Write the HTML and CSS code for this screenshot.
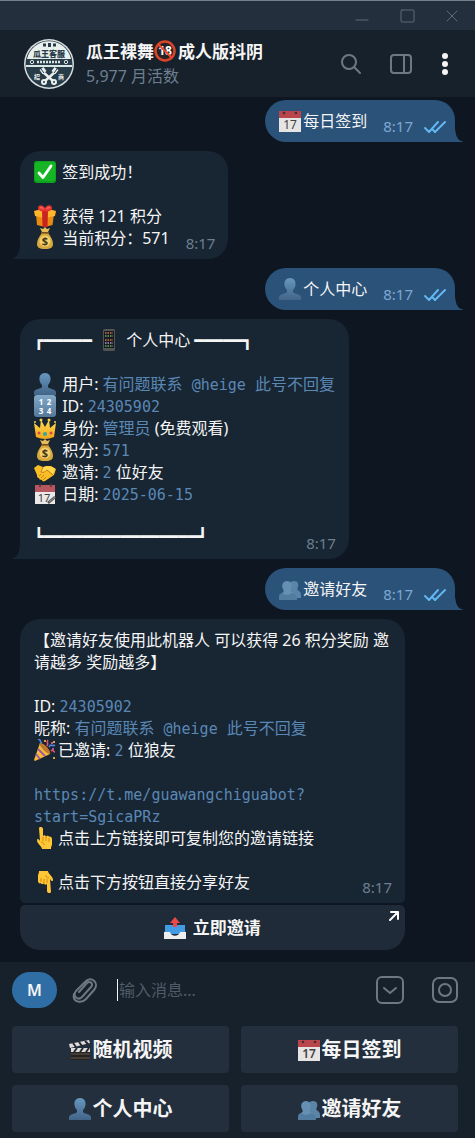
FILE: index.html
```html
<!DOCTYPE html>
<html lang="zh-CN">
<head>
  <meta charset="UTF-8">
  <meta name="viewport" content="width=device-width, initial-scale=1">
  <title>瓜王裸舞🔞成人版抖阴</title>
  <link rel="stylesheet" href="styles.css">
</head>
<body>
  <svg class="sprite" aria-hidden="true">
    <defs>
      <linearGradient id="blue" x1="0" y1="0" x2="0" y2="1"><stop offset="0" stop-color="#6797c0"/><stop offset="1" stop-color="#426487"/></linearGradient>
      <linearGradient id="gold" x1="0" y1="0" x2="0" y2="1"><stop offset="0" stop-color="#ffdc4f"/><stop offset="1" stop-color="#f1a51c"/></linearGradient>
      <linearGradient id="pad" x1="0" y1="0" x2="0" y2="1"><stop offset="0" stop-color="#83a9c9"/><stop offset="1" stop-color="#557899"/></linearGradient>
    </defs>
    <symbol id="check" viewBox="0 0 22 22">
      <rect width="22" height="22" rx="3" fill="#0ba51c"/><rect x="1" y="1" width="20" height="19" rx="3" fill="#17b526"/>
      <path fill="none" stroke="#fff" stroke-width="2.8" stroke-linecap="round" stroke-linejoin="round" d="M5 12l4 4.500L17 5"/>
    </symbol>
    <symbol id="gift" viewBox="0 0 22 22">
      <path fill="#e98b13" d="M2 9h18l-1.500 11L11 22l-8-2z"/>
      <path fill="#ffb52c" d="M0 6l11-3 11 3-1 5-10 2L1 11z"/>
      <path fill="#c9231f" d="M8 5h6l-.5 17h-5z"/><path fill="#e8352f" d="M11 6C8 7 4 6 4 3s4-4 7 0c3-4 7-3 7 0s-4 4-7 3z"/>
      <path fill="#ff766b" d="M6 3c0-2 3-1 4 1zM16 3c0-2-3-1-4 1z"/>
    </symbol>
    <symbol id="phone" viewBox="0 0 22 22">
      <rect x="5" y="0" width="12" height="22" rx="1.500" fill="#525653"/><rect x="6" y="2" width="10" height="17" fill="#161b20"/>
      <path stroke="#d4744e" stroke-width="1.500" stroke-dasharray="1.500 1" d="M7 4h8M7 11h8"/>
      <path stroke="#75a962" stroke-width="1.500" stroke-dasharray="1.500 1" d="M7 7h8M7 17h8"/>
      <path stroke="#b09bc3" stroke-width="1.500" stroke-dasharray="1.500 1" d="M7 14h8"/>
    </symbol>
    <symbol id="person" viewBox="0 0 22 22">
      <path fill="url(#blue)" d="M11 0c4 0 6 3 5.500 7-.3 2.500-1.500 4-2.500 5v2c1 2 7 1.500 8 5v3H0v-3c1-3.500 7-3 8-5v-2C7 11 5.800 9.500 5.500 7 5 3 7 0 11 0z"/>
    </symbol>
    <symbol id="people" viewBox="0 0 22 22">
      <path fill="#5a84a8" d="M15 3c4 0 5 3 4 6-1 2-1 3 1 4 2 1 2 3 2 7H8V9c2-1 2-6 7-6z"/>
      <path fill="#6590b3" d="M8 3c4 0 6 4 4 8-1 2 0 3 2 4 3 1 4 3 4 7H0c0-4 0-6 3-7 2-1 2-2 1-4-2-4 0-8 4-8z"/>
      <path fill="#426b90" d="M0 22c0-4 0-6 3-7 4 3 7 2 10 0 4 1 5 3 5 7z" opacity=".55"/>
    </symbol>
    <symbol id="crown" viewBox="0 0 22 22">
      <path fill="url(#gold)" d="M0 6l6 5 1-8 4 7 4-7 1 8 6-5-2 14q-9 4-18 0z"/>
      <g fill="#f7d34c"><circle cx="1" cy="5" r="1"/><circle cx="7" cy="3" r="1.500"/><circle cx="15" cy="3" r="1.500"/><circle cx="21" cy="5" r="1"/></g>
      <circle cx="11" cy="17" r="2" fill="#2fa8a0"/><circle cx="5" cy="16" r="1.500" fill="#d94747"/><circle cx="17" cy="16" r="1.500" fill="#d94747"/>
    </symbol>
    <symbol id="handshake" viewBox="0 0 22 22">
      <path fill="#f9bd25" d="M0 7l4-3 5 2 3-1 5 0 5 3-2 6-9 6c-2 1-3 0-3-1-2 0-3-1-3-2-2 0-2-2-2-3z"/>
      <path fill="#ffd84d" d="M8 7l5-2 5 1 3 2-2 5-5-4-4 2c-3 0-3-2-2-4z"/>
      <path fill="none" stroke="#bd791b" stroke-width=".9" d="M9 6l-2 5c2 1 4 0 6-2l6 5M5 15l2-2M7 17l3-3M9 19l3-3"/>
    </symbol>
    <symbol id="party" viewBox="0 0 22 22">
      <path fill="#f6bd35" d="M6 4c4 2 8 6 10 11L1 22l-1-1z"/>
      <path fill="#bd7830" d="M6 4c-2 2 6 11 10 11 2-2-6-12-10-11z"/>
      <path stroke="#a05aa5" stroke-width="2" d="M4 10l7 7M2 15l4 5"/>
      <path fill="none" stroke="#557fdb" stroke-width="1.700" d="M4 0c4 1 1 3 4 4M15 8c2-4 3 0 6-2"/>
      <path fill="none" stroke="#e95569" stroke-width="1.600" d="M13 7c2-3-1-4 1-6M17 12c2-2 2 1 4 1"/>
      <path fill="#d8a646" d="M10 1h2v2h-2zM19 2h2v2h-2zM19 18h2v2h-2z"/><path fill="#c1519a" d="M17 3h2v2h-2zM18 9h2v2h-2z"/>
    </symbol>
    <symbol id="point" viewBox="0 0 22 22">
      <path fill="#ffc635" d="M5 1c1-2 4-1 4 1v7c1-1 3-1 3 1 1-2 3-1 3 0 1-1 3 0 3 2v5c0 2-1 2-1 5H8c0-3-5-5-5-9 0-2 2-1 3 1z"/>
      <path fill="none" stroke="#d18915" d="M9 10v4M12 10v4M15 11v4M7 15c2 0 3 1 3 3"/>
    </symbol>
    <symbol id="outbox" viewBox="0 0 22 22">
      <path fill="#1d65ad" d="M3 8h16l3 8H0z"/><path fill="#439be4" d="M1 8h20v9H1z"/>
      <path fill="#eee" d="M0 15h6c1 5 9 5 10 0h6v7H0z"/>
      <path fill="#ec4849" d="M11 0l5 6h-3v4H9V6H6z"/>
    </symbol>
    <symbol id="clapper" viewBox="0 0 22 22">
      <path fill="#242322" d="M2 9h19v12H2z"/><path stroke="#51473f" stroke-width="1.500" d="M2 15h19M2 19h19"/>
      <path fill="#ddd" d="M2 9h19v4H2zM0 5l20-4 1 3L1 9z"/>
      <path stroke="#272727" stroke-width="2" d="M5 13l3-4M11 13l3-4M17 13l3-4M4 4l3 4M10 3l3 4M16 2l3 3"/>
    </symbol>
    <symbol id="ticks" viewBox="0 0 24 14">
      <path fill="none" stroke="#61b6f2" stroke-width="2" stroke-linecap="round" stroke-linejoin="round" d="M2 8l4 4 9-10M12 12l10-10"/>
      <path fill="none" stroke="#61b6f2" stroke-width="2" stroke-linecap="round" d="M9 9l3 3"/>
    </symbol>
  </svg>

  <div class="titlebar">
    <button aria-label="最小化"><svg width="16" height="16" viewBox="0 0 16 16"><path d="M2 12h12"/></svg></button>
    <button aria-label="最大化"><svg width="16" height="16" viewBox="0 0 16 16"><rect x="2" y="2" width="13" height="12" rx="1"/></svg></button>
    <button aria-label="关闭"><svg width="16" height="16" viewBox="0 0 16 16"><path d="M3 3l10 10M13 3L3 13"/></svg></button>
  </div>

  <header class="header">
    <svg class="avatar" viewBox="0 0 50 50" role="img" aria-label="瓜王客服">
      <circle cx="25" cy="25" r="25" fill="#d7dedd"/>
      <circle cx="25" cy="25" r="23.500" fill="#283b49"/>
      <path fill="#e9efed" d="M3 20a22.500 22.500 0 0 1 44 0z"/>
      <path fill="#283b49" d="M19 4.500h3v3h-3zM24 4h3v4h-3zM29 4.500h3v3h-3z"/>
      <text x="25" y="18" font-size="8" font-weight="900" text-anchor="middle" fill="#283b49">瓜王客服</text>
      <path fill="#dbe5e4" d="M2 26h46v2H2z"/>
      <circle cx="8" cy="23" r="1.700" fill="none" stroke="#dbe5e4"/><circle cx="42" cy="23" r="1.700" fill="none" stroke="#dbe5e4"/>
      <path stroke="#dbe5e4" stroke-width="2.500" stroke-dasharray="2 1" d="M13 23h24"/>
      <g stroke="#e9efed" stroke-width="2.500"><path d="M19 33l10 9M31 33l-10 9"/></g>
      <g stroke="#e9efed" stroke-width="5"><path d="M17 33l4-3M33 33l-4-3"/></g>
      <path stroke="#283b49" stroke-width="1" d="M17 30l3 4M33 30l-3 4"/>
      <circle cx="20" cy="43" r="2" fill="#283b49" stroke="#e9efed" stroke-width="2"/><circle cx="30" cy="43" r="2" fill="#283b49" stroke="#e9efed" stroke-width="2"/>
      <g fill="#e9efed" font-size="6" font-weight="bold" text-anchor="middle"><text x="13" y="40">招</text><text x="37" y="40">商</text></g>
    </svg>
    <div class="peer">
      <h1>瓜王裸舞<svg class="emoji" viewBox="0 0 22 22" role="img" aria-label="🔞">
        <circle cx="11" cy="11" r="9.500" fill="#272325" stroke="#d9452c" stroke-width="2.500"/>
        <text x="11" y="15" font-size="12" font-weight="bold" text-anchor="middle" fill="#fff">18</text>
        <path stroke="#ee4930" stroke-width="2" d="M4 4l14 14"/>
      </svg>成人版抖阴</h1>
      <p>5,977 月活数</p>
    </div>
    <nav class="actions">
      <button aria-label="搜索"><svg width="24" height="24" viewBox="0 0 24 24"><circle cx="10" cy="10" r="7"/><path d="M15 15l6 6"/></svg></button>
      <button aria-label="侧边栏"><svg width="24" height="24" viewBox="0 0 24 24"><rect x="2" y="3" width="20" height="18" rx="3"/><path d="M15 3v18"/></svg></button>
      <button class="dots" aria-label="更多"><svg width="8" height="24" viewBox="0 0 8 24"><circle cx="4" cy="4" r="3"/><circle cx="4" cy="12" r="3"/><circle cx="4" cy="20" r="3"/></svg></button>
    </nav>
  </header>

  <main class="chat">
    <div class="bubble out">
      <div class="last">
        <span><svg class="emoji" viewBox="0 0 22 22">
          <path fill="#e7e5e3" d="M0 5h22v17H0z"/>
          <path fill="#b9464c" d="M0 1h22v7H0z"/>
          <circle cx="5" cy="3" r="1.300" fill="#4d2a30"/><circle cx="17" cy="3" r="1.300" fill="#4d2a30"/>
          <text x="11" y="19" font-size="12" text-anchor="middle" fill="#414141">17</text>
        </svg>每日签到</span>
        <time>8:17</time><svg class="ticks"><use href="#ticks"/></svg>
      </div>
    </div>

    <div class="bubble in tail">
      <p><svg class="emoji"><use href="#check"/></svg> 签到成功！</p>
      <br>
      <p><svg class="emoji"><use href="#gift"/></svg> 获得 121 积分</p>
      <div class="last">
        <span><svg class="emoji" viewBox="0 0 22 22">
          <path fill="#d9a83d" d="M8 6h6c3 4 5 7 5 11 0 3-2 5-8 5s-8-2-8-5c0-4 2-7 5-11z"/>
          <path fill="#e6bd59" d="M8 5L6 1l3 1 2-2 2 2 3-1-2 4z"/><path stroke="#8f5e1b" stroke-width="1.500" d="M7 6h8"/>
          <circle cx="11" cy="14" r="5.500" fill="#f2d06d"/>
          <text x="11" y="18" font-size="11" font-weight="bold" text-anchor="middle" fill="#4b3717">$</text>
        </svg> 当前积分：571</span>
        <time>8:17</time>
      </div>
    </div>

    <div class="bubble out">
      <div class="last"><span><svg class="emoji"><use href="#person"/></svg>个人中心</span><time>8:17</time><svg class="ticks"><use href="#ticks"/></svg></div>
    </div>

    <div class="bubble in tail">
      <p><span class="frame">┏━━━━━</span> <svg class="emoji phone"><use href="#phone"/></svg> 个人中心 <span class="frame">━━━━━┓</span></p>
      <br>
      <p><svg class="emoji"><use href="#person"/></svg> 用户: <span class="value">有问题联系<code> @heige </code>此号不回复</span></p>
      <p><svg class="emoji" viewBox="0 0 22 22">
        <rect width="22" height="22" rx="3" fill="url(#pad)"/>
        <g fill="#fff" font-size="8" font-weight="bold" text-anchor="middle"><text x="7" y="10">1</text><text x="15" y="10">2</text><text x="7" y="19">3</text><text x="15" y="19">4</text></g>
      </svg> ID: <code>24305902</code></p>
      <p><svg class="emoji"><use href="#crown"/></svg> 身份: <span class="value">管理员</span> (免费观看)</p>
      <p><svg class="emoji" viewBox="0 0 22 22">
        <path fill="#d9a83d" d="M8 6h6c3 4 5 7 5 11 0 3-2 5-8 5s-8-2-8-5c0-4 2-7 5-11z"/>
        <path fill="#e6bd59" d="M8 5L6 1l3 1 2-2 2 2 3-1-2 4z"/><path stroke="#8f5e1b" stroke-width="1.500" d="M7 6h8"/>
        <circle cx="11" cy="14" r="5.500" fill="#f2d06d"/>
        <text x="11" y="18" font-size="11" font-weight="bold" text-anchor="middle" fill="#4b3717">$</text>
      </svg> 积分: <code>571</code></p>
      <p><svg class="emoji"><use href="#handshake"/></svg> 邀请: <code>2</code> 位好友</p>
      <p><svg class="emoji" viewBox="0 0 22 22">
        <path fill="#ebe9e8" d="M1 5h20v16H1z"/>
        <path fill="#b6575f" d="M1 2h20v7H1z"/>
        <path stroke="#45343a" stroke-width="1.400" d="M6 0v4M17 0v4"/>
        <text x="10" y="19" font-size="11" text-anchor="middle" fill="#414141">17</text>
        <path stroke="#555" stroke-width="2.600" d="M14 20l7-6"/><path stroke="#999" d="M15 19l6-5"/>
      </svg> 日期: <code>2025-06-15</code></p>
      <br>
      <div class="last"><span class="frame">┗━━━━━━━━━━━━━━━━┛</span><time>8:17</time></div>
    </div>

    <div class="bubble out">
      <div class="last"><span><svg class="emoji"><use href="#people"/></svg>邀请好友</span><time>8:17</time><svg class="ticks"><use href="#ticks"/></svg></div>
    </div>

    <div class="invite">
      <div class="bubble in">
        <p>【邀请好友使用此机器人 可以获得 26 积分奖励 邀请越多 奖励越多】</p>
        <br>
        <p>ID: <code>24305902</code></p>
        <p>昵称: <span class="value">有问题联系<code> @heige </code>此号不回复</span></p>
        <p><svg class="emoji"><use href="#party"/></svg>已邀请: <code>2</code> 位狼友</p>
        <br>
        <p><code>https://t.me/guawangchiguabot?<br>start=SgicaPRz</code></p>
        <p><svg class="emoji"><use href="#point"/></svg>点击上方链接即可复制您的邀请链接</p>
        <br>
        <div class="last"><span><svg class="emoji flip"><use href="#point"/></svg>点击下方按钮直接分享好友</span><time>8:17</time></div>
      </div>
      <button class="share">
        <svg class="emoji"><use href="#outbox"/></svg> 立即邀请
        <svg class="arrow" width="10" height="10" viewBox="0 0 10 10"><path d="M2 1h7v7M9 1L1 9"/></svg>
      </button>
    </div>
  </main>

  <footer class="composer">
    <form class="entry">
      <button type="button" class="menu">M</button>
      <button type="button" aria-label="附件"><svg width="26" height="28" viewBox="0 0 26 28"><path d="M7 16l8-9c3-3 7 1 4 4l-9 10c-4 4-10-1-6-6l9-9c6-7 15 1 9 8l-8 9c-5 5-14 3-12-5"/></svg></button>
      <input type="text" placeholder="输入消息..." aria-label="输入消息">
      <button type="button" aria-label="命令键盘"><svg width="28" height="28" viewBox="0 0 28 28"><rect x="1" y="1" width="26" height="26" rx="5"/><path d="M8 12l6 5 6-5"/></svg></button>
      <button type="button" aria-label="录制视频"><svg width="26" height="28" viewBox="0 0 26 28"><rect x="1" y="2" width="24" height="24" rx="6"/><circle cx="13" cy="14" r="6"/></svg></button>
    </form>
    <div class="keyboard">
      <button><svg class="emoji"><use href="#clapper"/></svg>随机视频</button>
      <button><svg class="emoji" viewBox="0 0 22 22">
        <path fill="#e7e5e3" d="M0 5h22v17H0z"/>
        <path fill="#b9464c" d="M0 1h22v7H0z"/>
        <circle cx="5" cy="3" r="1.300" fill="#4d2a30"/><circle cx="17" cy="3" r="1.300" fill="#4d2a30"/>
        <text x="11" y="19" font-size="12" text-anchor="middle" fill="#414141">17</text>
      </svg>每日签到</button>
      <button><svg class="emoji"><use href="#person"/></svg>个人中心</button>
      <button><svg class="emoji"><use href="#people"/></svg>邀请好友</button>
    </div>
  </footer>
</body>
</html>
```
FILE: styles.css
```css
* {
  box-sizing: border-box;
}
body {
  display: flex;
  flex-direction: column;
  min-height: 100vh;
  margin: 0;
  background: #0e1621;
  color: #f5f5f5;
  font-family: "Noto Sans", "Noto Sans CJK SC", sans-serif;
  font-size: 16px;
  line-height: 22px;
}
h1, p {
  margin: 0;
}
button {
  padding: 0;
  border: none;
  background: none;
  color: inherit;
  font: inherit;
  cursor: pointer;
}
button svg {
  display: block;
  fill: none;
  stroke: #6c7883;
  stroke-width: 2;
  stroke-linecap: round;
  stroke-linejoin: round;
}
.sprite {
  position: absolute;
  width: 0;
  height: 0;
}
.emoji, button .emoji {
  display: inline-block;
  width: 22px;
  height: 22px;
  margin-right: 2px;
  vertical-align: top;
  fill: #000;
  stroke: none;
  stroke-width: 1;
  stroke-linecap: butt;
}
.flip {
  transform: rotate(180deg);
}

/* window bar */
.titlebar {
  display: flex;
  justify-content: flex-end;
  align-items: center;
  gap: 29px;
  height: 30px;
  padding-right: 15px;
  background: #242f3d;
  border-top: 1px solid #74808c;
}
.titlebar svg {
  stroke: #5d6b79;
  stroke-width: 1;
}

/* chat header */
.header {
  display: flex;
  align-items: center;
  height: 67px;
  padding: 0 26px 0 24px;
  background: #17212b;
}
.avatar {
  flex: none;
  width: 50px;
  height: 50px;
}
.peer {
  flex: 1;
  margin-left: 12px;
  white-space: nowrap;
}
.peer h1 {
  font-size: 17px;
  line-height: 24px;
}
.peer p {
  line-height: 24px;
  color: #6d7f8f;
}
.actions {
  display: flex;
  align-items: center;
  gap: 26px;
}
.actions .dots {
  margin-left: 2px;
}
.actions .dots svg {
  fill: #f5f5f5;
  stroke: none;
}

/* messages */
.chat {
  flex: 1;
  display: flex;
  flex-direction: column;
  align-items: flex-start;
  gap: 9px;
  padding: 3px 20px 12px;
}
.bubble {
  position: relative;
  padding: 10px 14px;
  border-radius: 20px;
}
.in {
  background: #182533;
}
.out {
  align-self: flex-end;
  padding-right: 8px;
  background: #2b5278;
  border-radius: 21px 20px 0 21px;
}
.tail {
  border-bottom-left-radius: 0;
}
.tail::before, .out::after {
  content: "";
  position: absolute;
  bottom: 0;
  width: 8px;
  height: 12px;
}
.tail::before {
  right: 100%;
  background: radial-gradient(ellipse 8px 12px at 0 0, transparent 90%, #182533 100%);
}
.out::after {
  left: 100%;
  background: radial-gradient(ellipse 8px 12px at 100% 0, transparent 90%, #2b5278 100%);
}
.last {
  display: flex;
  justify-content: space-between;
  gap: 16px;
  height: 22px;
}
.last time {
  font-size: 15px;
  line-height: 32px;
  color: #6d7f8f;
}
.in time {
  margin-right: -1px;
}
.out time {
  color: #7da8d3;
}
.ticks {
  width: 24px;
  height: 14px;
  margin-top: 10px;
  margin-left: -6px;
}
code, .value {
  color: #5a88b5;
}
code {
  font-family: "DejaVu Sans Mono", monospace;
  font-size: 15px;
  line-height: 20px;
}
.frame {
  font-family: "DejaVu Sans Mono", monospace;
  line-height: 20px;
}
.phone {
  margin-left: 2px;
}
.invite {
  display: flex;
  flex-direction: column;
  gap: 2px;
  max-width: 385px;
}
.invite .bubble {
  border-radius: 20px 20px 5px 5px;
}
.share {
  position: relative;
  height: 45px;
  background: #1f2b38;
  border-radius: 5px 5px 20px 20px;
  font-size: 17px;
  font-weight: bold;
}
.share .arrow {
  position: absolute;
  top: 6px;
  right: 6px;
  stroke: #fff;
}

/* input and reply keyboard */
.composer {
  padding: 10px 17px 6px 12px;
  background: #17212b;
}
.entry {
  display: flex;
  align-items: center;
  height: 36px;
  margin-bottom: 18px;
}
.entry .menu {
  width: 45px;
  height: 36px;
  margin-right: 15px;
  border-radius: 18px;
  background: #2f6ea5;
  font-weight: 600;
}
.entry input {
  flex: 1;
  min-width: 0;
  height: 22px;
  margin-left: 19px;
  padding: 0 1px;
  border: none;
  border-left: 1px solid #f5f5f5;
  outline: none;
  background: none;
  color: #f5f5f5;
  font: inherit;
}
.entry input::placeholder {
  color: #4f5b67;
}
.entry input ~ button {
  margin-left: 28px;
}
.keyboard {
  display: grid;
  grid-template-columns: 1fr 1fr;
  gap: 12px;
}
.keyboard button {
  height: 47px;
  border-radius: 4px;
  background: #242f3d;
  font-size: 20px;
  font-weight: 600;
}
```
